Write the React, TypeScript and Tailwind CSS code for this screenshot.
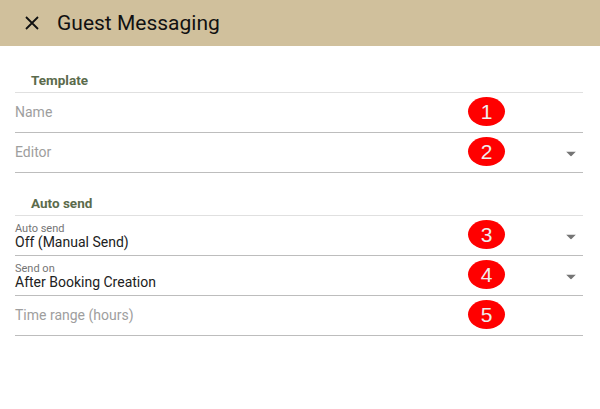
import React from "react";

const Badge = ({ n, top }: { n: number; top: number }) => (
  <div
    className="absolute left-[453px] w-[37px] h-[29px] rounded-[50%] bg-[#ff0000] flex items-center justify-center text-[21px] leading-none text-[#eeeeee] pointer-events-none"
    style={{ top, fontFamily: '"Liberation Sans", Arial, sans-serif' }}
  >
    {n}
  </div>
);

const Arrow = () => (
  <svg width="10" height="5" viewBox="0 0 10 5" className="absolute right-[7px] top-1/2 -translate-y-1/2 mt-[1px]">
    <path d="M0 0 L10 0 L5 5 Z" fill="#757575" />
  </svg>
);

const Row = ({
  children,
  badge,
  arrow,
}: {
  children: React.ReactNode;
  badge: number;
  arrow?: boolean;
}) => (
  <div className="relative h-[40px] border-b border-[#bdbdbd] flex flex-col justify-center">
    {children}
    {arrow && <Arrow />}
    <Badge n={badge} top={4} />
  </div>
);

export default function App() {
  return (
    <div
      className="w-[600px] h-[409px] bg-white relative"
      style={{ fontFamily: 'Roboto, "Noto Sans", sans-serif' }}
    >
      <div className="h-[46px] bg-[#d0c09c] flex items-center">
        <svg width="14" height="14" viewBox="0 0 14 14" className="ml-[25px]">
          <path d="M1 1 L13 13 M13 1 L1 13" stroke="#111" strokeWidth="1.8" />
        </svg>
        <span className="ml-[18px] text-[21px] text-[#111] leading-none">Guest Messaging</span>
      </div>
      <div className="pl-[15px] pr-[17px]">
        <div className="pt-[26px] pb-[4px] border-b border-[#e0e0e0] h-[47px] flex items-end">
          <span className="ml-[16px] text-[13.5px] font-bold text-[#5b6b4c] leading-[16px]">Template</span>
        </div>
        <Row badge={1}>
          <span className="text-[14px] text-[#9e9e9e]">Name</span>
        </Row>
        <Row badge={2} arrow>
          <span className="text-[14px] text-[#9e9e9e]">Editor</span>
        </Row>
        <div className="pb-[4px] border-b border-[#e0e0e0] h-[43px] flex items-end">
          <span className="ml-[16px] text-[13.5px] font-bold text-[#5b6b4c] leading-[16px]">Auto send</span>
        </div>
        <Row badge={3} arrow>
          <span className="text-[11px] leading-[11px] text-[#757575] mt-[2px]">Auto send</span>
          <span className="text-[14px] leading-[17px] text-[#212121]">Off (Manual Send)</span>
        </Row>
        <Row badge={4} arrow>
          <span className="text-[11px] leading-[11px] text-[#757575] mt-[2px]">Send on</span>
          <span className="text-[14px] leading-[17px] text-[#212121]">After Booking Creation</span>
        </Row>
        <Row badge={5}>
          <span className="text-[14px] text-[#9e9e9e]">Time range (hours)</span>
        </Row>
      </div>
    </div>
  );
}
